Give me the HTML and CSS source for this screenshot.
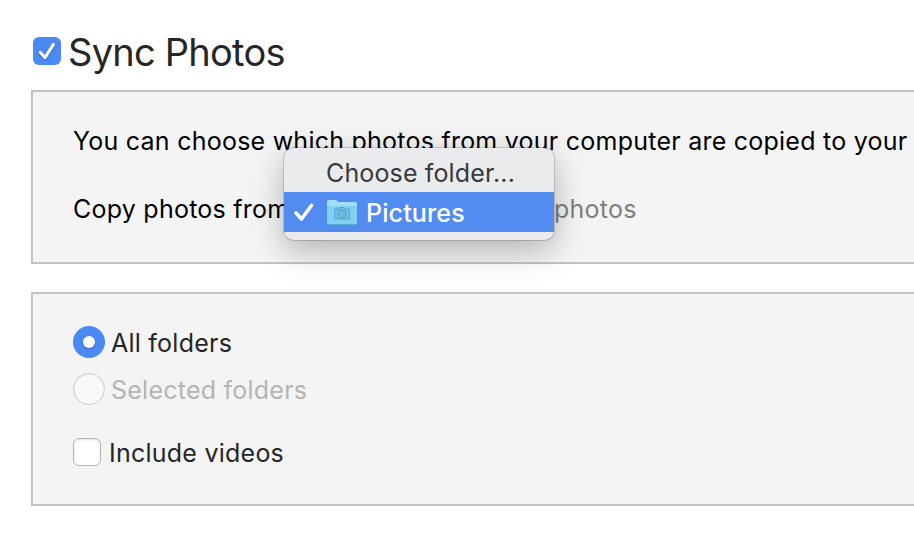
FILE: index.html
```html
<!DOCTYPE html>
<html lang="en">
<head>
    <meta charset="UTF-8">
    <meta name="viewport" content="width=device-width, initial-scale=1.0">
    <title>Sync Photos</title>
    <link rel="stylesheet" href="styles.css">
</head>
<body>
    <div class="header">
        <span class="checkbox checked">
            <svg width="28" height="28" viewBox="0 0 28 28">
                <path d="M7.4 15.4L12 20.6L20.4 7.4" />
            </svg>
        </span>
        <h1>Sync Photos</h1>
    </div>

    <!-- Source of the photos -->
    <div class="panel source">
        <p class="info">You can choose which photos from your computer are copied to your</p>
        <div class="copy-row">
            <span class="copy-label">Copy photos from</span>
            <div class="select">
                <div class="menu">
                    <div class="menu-item choose">
                        <span>Choose folder...</span>
                    </div>
                    <div class="menu-item selected">
                        <svg class="tick" width="22" height="20" viewBox="0 0 22 20">
                            <path d="M3 11L8.5 17L18.5 3.5" />
                        </svg>
                        <svg class="folder" width="32" height="28" viewBox="0 0 32 28">
                            <path d="M1 25.5V3.5Q1 2 2.5 2H9.5Q10.5 2 11.2 2.8L12.3 4H29.5Q31 4 31 5.5V25.5Q31 27 29.5 27H2.5Q1 27 1 25.5Z" fill="#5aaed3" />
                            <path d="M1 24.5V3.5Q1 2 2.5 2H9.5Q10.5 2 11.2 2.8L12.3 4H29.5Q31 4 31 5.5V24.5Q31 26 29.5 26H2.5Q1 26 1 24.5Z" fill="#a5dcf7" />
                            <path d="M1 8H31V24.5Q31 26 29.5 26H2.5Q1 26 1 24.5Z" fill="#82cff4" />
                            <rect x="8.5" y="11" width="15" height="10" rx="1" fill="#72bde3" stroke="#54a4ce" />
                            <path d="M12.5 11L13.5 9.5H18.5L19.5 11M9.8 10H11.5" fill="none" stroke="#54a4ce" />
                            <circle cx="16" cy="16" r="3.6" fill="#7fcbef" stroke="#4c9bc7" />
                            <circle cx="16" cy="16" r="2" fill="#72bde3" stroke="#62b0d8" stroke-width="0.6" />
                        </svg>
                        <span>Pictures</span>
                    </div>
                </div>
            </div>
            <span class="count">photos</span>
        </div>
    </div>

    <!-- Folder options -->
    <div class="panel options">
        <div class="option">
            <span class="radio on"></span>
            <span class="label">All folders</span>
        </div>
        <div class="option disabled">
            <span class="radio"></span>
            <span class="label">Selected folders</span>
        </div>
        <div class="option videos">
            <span class="checkbox"></span>
            <span>Include videos</span>
        </div>
    </div>
</body>
</html>
```
FILE: styles.css
```css
* {
    box-sizing: border-box;
}

body {
    margin: 0;
    height: 542px;
    overflow: hidden;
    background-color: #fff;
    color: #262626;
    font-family: Inter, "Liberation Sans", sans-serif;
    font-size: 25px;
    line-height: 32px;
    letter-spacing: 0.24px;
    white-space: nowrap;
}

.header {
    display: flex;
    align-items: center;
    height: 90px;
    padding: 12px 0 0 33px;
    gap: 7px;
}

h1 {
    margin: 2px 0 0;
    font-size: 38px;
    line-height: 46px;
    font-weight: 400;
    letter-spacing: -0.75px;
}

/* Both panels run off the right edge of the window */
.panel {
    width: 920px;
    margin-left: 31px;
    border: 2px solid #c3c3c3;
    background-color: #f4f4f4;
}

.source {
    height: 174px;
    padding: 33px 0 0 40px;
    color: #000;
}

.info {
    margin: 0 0 36px;
}

.copy-row {
    display: flex;
    height: 32px;
}

.copy-label {
    width: 211px;
}

.select {
    position: relative;
    width: 270px;
}

.count {
    color: #7f7f7f;
}

/* Open popup over the select */
.menu {
    position: absolute;
    left: 0;
    top: -45px;
    width: 270px;
    height: 92px;
    padding-top: 4px;
    border-radius: 10px;
    background-color: #e9ebed;
    box-shadow: 0 0 0 1px rgba(0, 0, 0, 0.15), 0 10px 32px rgba(0, 0, 0, 0.28);
    color: #38393b;
    font-weight: 500;
    letter-spacing: 0.14px;
}

.menu-item {
    display: flex;
    align-items: center;
    height: 40px;
}

.menu-item span {
    padding-top: 2px;
}

.choose {
    padding-left: 42px;
    font-weight: 400;
}

.selected {
    padding-left: 9px;
    background-color: #528cf0;
    color: #fff;
}

.tick {
    fill: none;
    stroke: #fff;
    stroke-width: 3.6;
    stroke-linecap: round;
    stroke-linejoin: round;
}

.folder {
    margin: 0 8px 0 11px;
}

.options {
    height: 214px;
    margin-top: 28px;
    padding: 32px 0 0 40px;
}

.option {
    display: flex;
    align-items: center;
    height: 32px;
    margin-bottom: 15px;
    gap: 6px;
}

.label {
    padding-top: 2px;
}

.disabled {
    color: #b5b5b5;
}

.videos {
    margin-top: 31px;
    gap: 8px;
}

.videos span:last-child {
    padding-top: 2px;
}

.radio {
    display: flex;
    align-items: center;
    justify-content: center;
    width: 32px;
    height: 32px;
    border: 1px solid #cbcbcb;
    border-radius: 50%;
    background-color: #f9f9f9;
    box-shadow: inset 0 1px 2px rgba(0, 0, 0, 0.07);
}

.radio.on {
    border: none;
    background-color: #4b8af5;
    box-shadow: none;
}

.radio.on::after {
    content: "";
    width: 12px;
    height: 12px;
    border-radius: 50%;
    background-color: #fff;
    box-shadow: 0 1px 2px rgba(0, 0, 0, 0.3);
}

.checkbox {
    width: 28px;
    height: 28px;
    border: 1px solid #b5b5b5;
    border-radius: 6px;
    background-color: #fff;
    box-shadow: inset 0 1px 2px rgba(0, 0, 0, 0.12);
}

.checkbox.checked {
    border: none;
    background-color: #4b8af5;
    box-shadow: none;
}

.checkbox svg {
    display: block;
    fill: none;
    stroke: #fff;
    stroke-width: 3;
    stroke-linecap: round;
    stroke-linejoin: round;
    filter: drop-shadow(0 1px 1px rgba(0, 0, 0, 0.25));
}
```
